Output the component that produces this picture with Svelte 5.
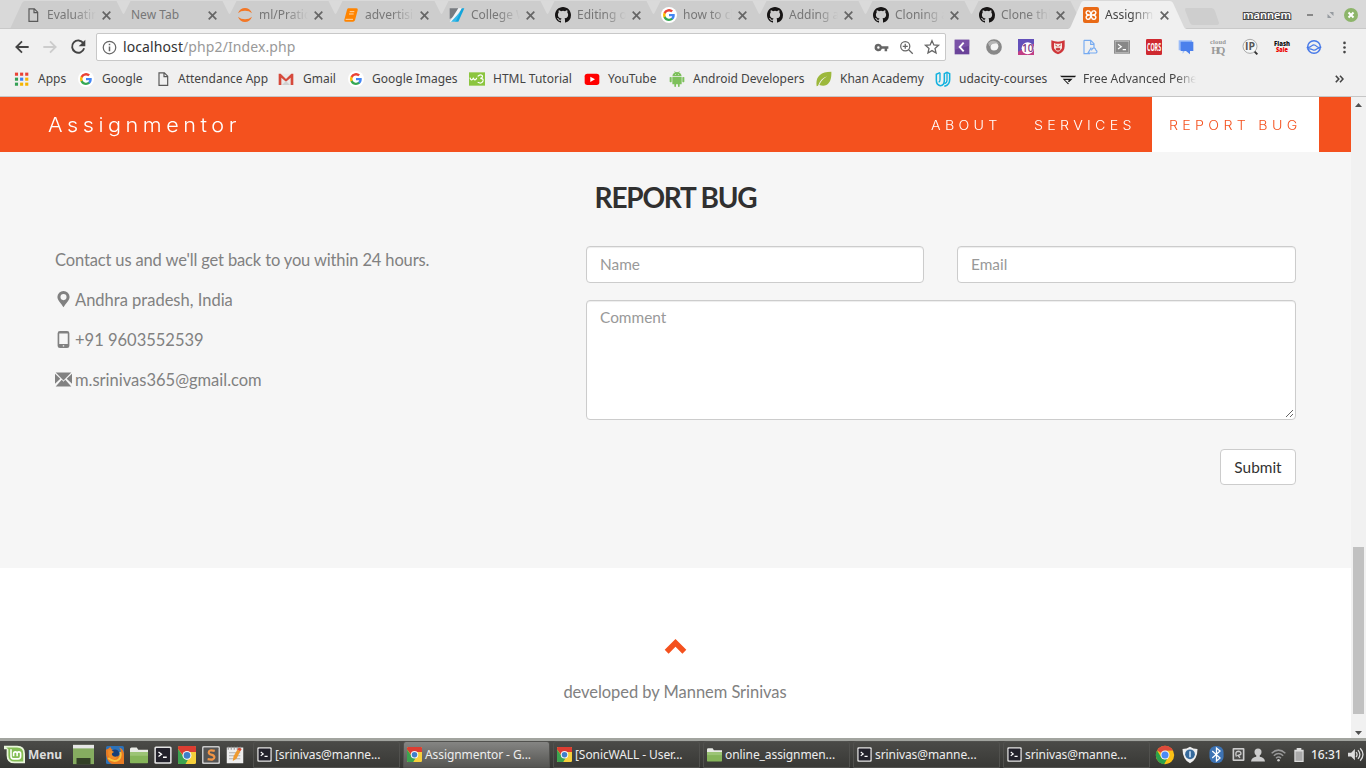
<script>
  const chromeLogo = `
    <circle cx="12" cy="12" r="11" fill="#fbc116"/>
    <path d="M12 12 2.5 6.5A11 11 0 0 1 21.600 6.500L12 7Z" fill="#dd4a3b"/>
    <path d="M2.500 6.500A11 11 0 0 0 11 23l5-9-4 3a5 5 0 0 1-5-3Z" fill="#2ba24c"/>
    <circle cx="12" cy="12" r="5.400" fill="#f4f4f4"/><circle cx="12" cy="12" r="4.200" fill="#4a8af4"/>`;
  const chromeSquare = `
    <rect x="0" y="0" width="24" height="24" rx="2" fill="#f6cf3b"/>
    <path d="M0 2a2 2 0 0 1 2-2h20a2 2 0 0 1 2 2v6H12L8 14 0 4Z" fill="#dc3d32"/>
    <path d="M0 4l8 11 6 2-4 7H2a2 2 0 0 1-2-2Z" fill="#3ca450"/>
    <circle cx="12" cy="12.500" r="6" fill="#f4f4f4"/><circle cx="12" cy="12.500" r="4.400" fill="#3f7fc9"/>`;
  const terminal = `
    <rect x="0.500" y="0.500" width="23" height="23" rx="2" fill="#e4e4e4"/>
    <rect x="2.500" y="2.500" width="19" height="19" rx="1" fill="#22212b"/>
    <path d="M6 8l4 3-4 3M12 15h5" fill="none" stroke="#fff" stroke-width="1.800"/>`;
  const folder = `
    <path d="M0 4q0-2 2-2h7l2 3h13v4H0Z" fill="#e9ebe6"/>
    <rect x="0" y="8" width="24" height="15" rx="1" fill="#86b55a"/>
    <path d="M0 8h24v5H0Z" fill="#9cc476"/>`;
  const page = `<path d="M6 2.700h8l5 5V21.500H6ZM13.500 3v5.500H19" fill="none" stroke="#5a5a5a" stroke-width="1.800"/>`;

  // Every glyph is drawn on a 24 by 24 grid.
  const art = {
    page, folder, terminal, chromeLogo, chromeSquare,
    jupyter: `<path d="M1.500 9.500C5-1 19-1 22.500 9.500 17 4.500 7 4.500 1.500 9.500ZM1.500 14.500c3.500 10.500 17.500 10.500 21 0-5.500 5-15.500 5-21 0Z" fill="#f37726"/>`,
    book: `<path d="M8 2h12q3 0 2 3l-4 15q-1 2-3 2H4q-3 0-2-3L6 4q1-2 2-2Z" fill="#ff8400"/><path d="M10 7h7M9 10.500h7M4 18.500h11" fill="none" stroke="#ffe3c2" stroke-width="1.300"/>`,
    college: `<path d="M1 2h13L9 14l-8 4Z" fill="#777b80"/><path d="M9 22 19 2h4L14 22Z" fill="#12a5dc"/><path d="M14 2h5L6 22H1Z" fill="#f2f4f6"/><path d="M3 22 17 7 10 22Z" fill="#35b8e8"/>`,
    github: `<path transform="scale(1.5)" fill="#171515" fill-rule="evenodd" d="M8 0C3.580 0 0 3.580 0 8c0 3.540 2.290 6.530 5.470 7.590.4.07.55-.17.55-.38 0-.19-.01-.82-.01-1.490-2.010.37-2.530-.49-2.690-.94-.09-.23-.48-.94-.82-1.130-.28-.15-.68-.52-.01-.53.63-.01 1.080.58 1.230.82.72 1.210 1.870.87 2.330.66.07-.52.28-.87.51-1.070-1.780-.2-3.640-.89-3.640-3.950 0-.87.31-1.590.82-2.150-.08-.2-.36-1.020.08-2.120 0 0 .67-.21 2.200.82a7.600 7.600 0 0 1 4 0c1.530-1.040 2.200-.82 2.200-.82.44 1.100.16 1.920.08 2.120.51.56.82 1.270.82 2.150 0 3.070-1.870 3.750-3.650 3.950.29.25.54.73.54 1.480 0 1.070-.01 1.930-.01 2.200 0 .21.15.46.55.38A8.010 8.010 0 0 0 16 8c0-4.420-3.580-8-8-8z"/>`,
    google: `<circle cx="12" cy="12" r="12" fill="#fff"/><g transform="translate(3 3) scale(.75)"><path fill="#4285f4" d="M23.500 12.300c0-.8-.1-1.600-.2-2.300H12v4.500h6.500a5.600 5.600 0 0 1-2.400 3.600v3h3.900c2.200-2.100 3.500-5.200 3.500-8.800Z"/><path fill="#34a853" d="M12 24c3.200 0 6-1.100 8-2.900l-3.900-3a7.200 7.200 0 0 1-10.800-3.800h-4v3.100A12 12 0 0 0 12 24Z"/><path fill="#fbbc05" d="M5.300 14.300a7.100 7.100 0 0 1 0-4.600V6.600h-4a12 12 0 0 0 0 10.800Z"/><path fill="#ea4335" d="M12 4.800c1.800 0 3.400.6 4.600 1.800L20 3.200A12 12 0 0 0 1.300 6.600l4 3.100A7.100 7.100 0 0 1 12 4.800Z"/></g>`,
    xampp: `<rect width="24" height="24" rx="3" fill="#e96a16"/><path d="M8 5.500a3 3 0 0 0-2.500 5q1 1.500 4 1.500h5q3 0 4-1.500a3 3 0 0 0-2.500-5q-2.500 0-3 3-.5 2-1 2t-1-2q-.5-3-3-3ZM8 18.500a3 3 0 0 1-2.500-5q1-1.500 4-1.500h5q3 0 4 1.500a3 3 0 0 1-2.500 5q-2.500 0-3-3-.5-2-1-2t-1 2q-.5 3-3 3Z" fill="none" stroke="#fff" stroke-width="2.200"/>`,
    apps: [0, 1, 2].flatMap(r => [0, 1, 2].map(c => `<rect x="${1.5 + c * 8.2}" y="${1 + r * 8}" width="5" height="5" fill="${['#ea4335', '#ea4335', '#ea4335', '#34a055', '#3b83f6', '#f5b400', '#34a055', '#f5b400', '#f5b400'][r * 3 + c]}"/>`)).join(''),
    gmail: `<path d="M2 4h20v17H2Z" fill="#e9e9e9"/><path d="M1 21V4h3l8 8 8-8h3v17h-4V10l-7 6-7-6v11Z" fill="#d64a3c"/><path d="m6 21 6-6 6 6Z" fill="#d0d0d0"/>`,
    w3: `<rect y="2" width="24" height="20" fill="#8bc53f"/><path d="M1.500 10q1 4 3 3t2-3q1 4 3 3t2-3M13 8q4-4 7-1 1 3-3 4 5 0 4 4-2 5-8 2" fill="none" stroke="#fff" stroke-width="1.700"/>`,
    youtube: `<rect x="1" y="4" width="22" height="17" rx="4" fill="#f00"/><path d="M9.500 8.500v8l7-4Z" fill="#fff"/>`,
    android: `<path d="M5 9h14v10q0 1-1 1h-2v3q0 1-1.300 1T13.500 23v-3h-3v3q0 1-1.300 1T8 23v-3H6q-1 0-1-1ZM1 9.500q1.500-1 3 0V16q-1.500 1.500-3 0ZM20 9.500q1.500-1 3 0V16q-1.500 1.500-3 0ZM5 8q0-4 4-6L8 .5 8.500 0 10 1.700q2-.5 4 0L15.500 0l.5.500L15 2q4 2 4 6Z" fill="#7dc05b"/><path d="M9 4.500h1v1H9ZM14 4.500h1v1h-1Z" fill="#fff"/>`,
    leaf: `<path d="M1 23C-1 10 5 1 23 1c1 17-7 24-18 20q3-8 12-13Q7 11 3 22Z" fill="#9cb83c"/>`,
    udacity: `<path d="M7.500 2.500 2 5v9q0 7 6 8 6 0 6-8V4l4-2 4 2v9q0 8-8 10" fill="none" stroke="#12b2df" stroke-width="2.300"/><path d="M7.500 2.500V13q0 3-2 3.500M18 2.500V14q0 4-4 5" fill="none" stroke="#12b2df" stroke-width="2"/>`,
    tri: `<path d="M0 7h24l-1.500 2.500H2.500Z" fill="#151515"/><path d="M4 11.500h15L13.500 17l-2-2 2.500-1.500H7.500l6 5.500-1.500 1Z" fill="#151515"/>`,
    key: `<path d="M7 6a6 6 0 1 0 5.600 8H17v4h4v-4h2v-4H12.600A6 6 0 0 0 7 6Zm0 4a2 2 0 1 1 0 4 2 2 0 0 1 0-4Z" fill="#666" fill-rule="evenodd"/>`,
    loupe: `<circle cx="10" cy="10" r="7.300" fill="none" stroke="#666" stroke-width="2"/><path d="M10 6v8M6 10h8M15.500 15.500 22 22" fill="none" stroke="#666" stroke-width="2"/>`,
    star: `<path d="m12 2.500 2.800 6.400 7 .6-5.300 4.600 1.600 6.900-6.100-3.600L5.900 21l1.600-6.900-5.300-4.600 7-.6Z" fill="none" stroke="#666" stroke-width="1.900"/>`,
    back: `<path d="M22 12H4M12 3.500 3.500 12l8.500 8.500" fill="none" stroke="#444" stroke-width="2.700"/>`,
    forward: `<path d="M2 12h18M12 3.500l8.500 8.500-8.500 8.500" fill="none" stroke="#ccc" stroke-width="2.700"/>`,
    reload: `<path d="M20 6.200A9.200 9.200 0 1 0 21.200 14" fill="none" stroke="#444" stroke-width="2.800"/><path d="M23 1v10H13Z" fill="#444"/>`,
    info: `<circle cx="12" cy="12" r="10" fill="none" stroke="#666" stroke-width="2"/><path d="M12 6v2.500M12 10.500V18" stroke="#666" stroke-width="2.400"/>`,
    kilo: `<rect x="1" y="1" width="22" height="22" fill="#6a4399"/><path d="M1 1h22v9L1 16Z" fill="#8a62b5" opacity=".5"/><path d="m14.500 5.500-6 6.500 6 6.500" fill="none" stroke="#fff" stroke-width="2.800"/>`,
    ring: `<circle cx="12" cy="12" r="8.500" fill="none" stroke="#888" stroke-width="6.500"/><circle cx="13" cy="11" r="5.500" fill="#f4f4f4"/><path d="M3 6q8-7 17 1-9-2-15 4Z" fill="#b5b5b5"/>`,
    ten: `<rect width="24" height="24" fill="#c23f86"/><path d="M0 0h24v7L0 19Z" fill="#6350ba"/><circle cx="14.500" cy="14" r="9" fill="#fff"/><text x="6" y="19.500" font-family="Open Sans" font-size="15" font-weight="600" fill="#7c3a83" textLength="17" lengthAdjust="spacingAndGlyphs">10</text>`,
    pig: `<path d="M2 2q10 4 20 0v9q0 9-10 12Q2 20 2 11Z" fill="#cf363a"/><path d="m6 6 3 1h6l3-1v8q-3 5-6 5t-6-5Z" fill="#f4e8e2"/><path d="M8 9l3 2M16 9l-3 2M9.500 14h5v2.500h-5Z" stroke="#c9383a" stroke-width="1.500" fill="#c9383a"/>`,
    drive: `<path d="M3 2h10l5 5v7M13 2v6h5M3 2v20h9" fill="none" stroke="#75aaf1" stroke-width="1.700"/><path d="m14 13-5 8h12q3-2 0-4-1-5-5-3-1 2-2 3" fill="none" stroke="#75aaf1" stroke-width="1.700"/>`,
    shell: `<rect x="0" y="2" width="24" height="20" fill="#888"/><rect x="1.800" y="3.800" width="20.400" height="16.400" fill="none" stroke="#c4c4c4"/><path d="m6 8 5 3.500L6 15M13 16h5" fill="none" stroke="#fff" stroke-width="1.700"/>`,
    cors: `<rect width="24" height="24" rx="2" fill="#cf2930"/><text transform="translate(1.500 17.500) scale(.62 1)" font-family="Open Sans" font-size="15" font-weight="700" fill="#fff" textLength="34" lengthAdjust="spacingAndGlyphs">CORS</text>`,
    chat: `<path d="M1 2h20v15H11l-4 5v-5H1Z" fill="#9abcf9"/><path d="M4 4h19v14h-5v5l-6-5H4Z" fill="#4b80ec"/>`,
    cloudhq: `<text x="0" y="8" font-family="Liberation Serif" font-size="10" font-weight="700" fill="#999" textLength="24">cloud</text><text x="2" y="22" font-family="Liberation Serif" font-size="16" font-weight="700" fill="#999" textLength="21">HQ</text>`,
    ip: `<circle cx="12" cy="11" r="10.500" fill="#f4f6f6" stroke="#aaa" stroke-width="1.500"/><path d="m19 19 4 4" stroke="#333" stroke-width="3"/><text x="4.500" y="16.500" font-family="Open Sans" font-size="15" font-weight="700" fill="#555" textLength="15" lengthAdjust="spacingAndGlyphs">IP</text>`,
    flash: `<text x="0" y="10" font-family="Open Sans" font-size="10" font-weight="800" fill="#111" textLength="24" lengthAdjust="spacingAndGlyphs">Flash</text><text x="3" y="20" font-family="Open Sans" font-size="10" font-weight="800" fill="#e00" textLength="18" lengthAdjust="spacingAndGlyphs">Sale</text>`,
    wave: `<circle cx="12" cy="12" r="9.500" fill="none" stroke="#4779e8" stroke-width="2.200"/><path d="M1 13q5 0 8-3t7 1q3 3 7 1M2 15q5-1 8 1t6-1l7-3" fill="none" stroke="#4779e8" stroke-width="1.900"/>`,
    dots: `<circle cx="12" cy="3.500" r="2.400" fill="#444"/><circle cx="12" cy="12" r="2.400" fill="#444"/><circle cx="12" cy="20.500" r="2.400" fill="#444"/>`,
    pin: `<path d="M12 0a8.600 8.600 0 0 0-8.600 8.600C3.400 13.500 9 18 12 23c3-5 8.600-9.500 8.600-14.400A8.600 8.600 0 0 0 12 0Zm0 4.300a4.300 4.300 0 1 1 0 8.600 4.300 4.300 0 0 1 0-8.600Z" fill="#818181" fill-rule="evenodd"/>`,
    phone: `<path d="M7 0h10q3.300 0 3.300 3v18q0 3-3.300 3H7q-3.300 0-3.300-3V3q0-3 3.300-3ZM6 3.500v15h12v-15Zm5 16.500v2h2v-2Z" fill="#818181" fill-rule="evenodd"/>`,
    mail: `<path d="M1 2h22L12 13.500ZM0 4l7.500 7L0 18ZM24 4v14l-7.500-7ZM1 22l8.500-9.500L12 15l2.500-2.500L23 22Z" fill="#818181"/>`,
    up: `<path d="m3.500 17 8.500-8.500 8.500 8.500" fill="none" stroke="#f4511e" stroke-width="5.300"/>`,
    mint: `<path d="M0 2h15q9 0 9 9v11H12q-9 0-9-9V6H0Z" fill="#e9f5dc"/><path d="M2.500 4H15q7 0 7 7v9H12q-7 0-7-7V6Z" fill="#84bd55"/><path d="M8 6v8q0 3 3 3h5q3 0 3-3v-3q0-2-2-2t-2 2v3m0-3q0-2-2-2t-2 2v3" fill="none" stroke="#fff" stroke-width="1.800"/>`,
    desktop: `<rect y="1" width="24" height="22" fill="#86ac60"/><rect y="1" width="24" height="4" fill="#e6e6e6"/><rect x="4" y="16" width="16" height="7" fill="#334026"/>`,
    firefox: `<rect width="24" height="24" rx="2" fill="#2c71b8"/><path d="M0 5q3-1 6-4 0 4 6 5-5 2-2 6 5 4 9-1 2-6-2-9 6 1 7 8v14H8Q-1 21 0 5Z" fill="#e97b22"/><path d="M3 16q8 7 14 2 4-4 2-10" fill="none" stroke="#f8c33c" stroke-width="2.500"/><circle cx="12" cy="10" r="5.500" fill="#173f78"/><path d="M3 5q5 1 8 3-4 1-3 4 3 4 8 1-3 7-10 3-4-3-3-11Z" fill="#ef8d28"/>`,
    sublime: `<rect width="24" height="24" rx="2" fill="#c8c8c8"/><rect x="2" y="2" width="20" height="20" rx="1" fill="#555"/><path d="M17 6.500q-8-2-8 2 0 2 3.500 3 4 1 4 3.500 0 4.500-9 2.500" fill="none" stroke="#f29545" stroke-width="2.900"/>`,
    notes: `<path d="M1 2h22v21H1Z" fill="#eee"/><path d="M3 1v4M7 1v4M11 1v4M15 1v4M19 1v4" stroke="#999" stroke-width="1.500"/><path d="M4 9h15M4 13h15M4 17h15" stroke="#999"/><path d="m9 20 1-6 5-9 4 2-5 10Z" fill="#ef9a2f"/><path d="m15 5 2-3 4 2-2 3Z" fill="#d94c30"/>`,
    shield: `<path d="M2 4q6 0 10-3 4 3 10 3 0 14-10 19Q2 18 2 4Z" fill="#eee"/><circle cx="12" cy="11" r="6.500" fill="#366a9c"/><path d="M12 7v8" stroke="#d3e7ff" stroke-width="2"/>`,
    bluetooth: `<rect x="2" width="20" height="24" rx="9" fill="#3d73b4"/><path d="m6 7 11 10-5 4V3l5 4L6 17" fill="none" stroke="#fff" stroke-width="1.800"/>`,
    disk: `<rect x="1" y="0" width="22" height="24" rx="2" fill="#ccc"/><rect x="4" y="3" width="16" height="18" fill="#4b4b49"/><path d="M8 16q-3-10 4-10 6 1 4 6l-5 2 4 4" fill="none" stroke="#ccc" stroke-width="2.500"/>`,
    user: `<circle cx="12" cy="7" r="6" fill="#ccc"/><path d="M9 10h6v5q8 1 9 8H0q1-7 9-8Z" fill="#ccc"/>`,
    wifi: `<path d="M1 10q11-10 22 0M4.500 14q7.500-7 15 0M8 18q4-4 8 0" fill="none" stroke="#999" stroke-width="2.300"/><circle cx="12" cy="21" r="2" fill="#ccc"/>`,
    battery: `<path d="M8 0h8v3h4v21H4V3h4Z" fill="#ddd"/><path d="M6 6h12v16H6Z" fill="#aaa"/>`,
    sound: `<path d="M0 9h5l6-6v18l-6-6H0Z" fill="#ddd"/><path d="M13 8q3 4 0 8M16 5q6 7 0 14M19.500 2q9 10 0 20" fill="none" stroke="#ddd" stroke-width="2"/>`
  };

  const tabs = [
    ['page', 'Evaluating'], ['', 'New Tab'], ['jupyter', 'ml/Pratice'], ['book', 'advertising'], ['college', 'College W'],
    ['github', 'Editing on'], ['google', 'how to cl'], ['github', 'Adding a f'], ['github', 'Cloning a'], ['github', 'Clone this'], ['xampp', 'Assignmen']
  ];
  const pitch = 106;

  // icon, label, item width, room for the icon, icon size
  const bookmarks = [
    ['apps', 'Apps', 64, 24, 15], ['google', 'Google', 77, 24, 16], ['page', 'Attendance App', 123, 23, 16],
    ['gmail', 'Gmail', 70, 25, 16], ['google', 'Google Images', 121, 24, 16], ['w3', 'HTML Tutorial', 115, 24, 16],
    ['youtube', 'YouTube', 85, 24, 16], ['android', 'Android Developers', 147, 24, 16], ['leaf', 'Khan Academy', 119, 24, 16],
    ['udacity', 'udacity-courses', 125, 24, 16], ['tri', 'Free Advanced Penetration', 136, 23, 16]
  ];
  const extensions = ['kilo', 'ring', 'ten', 'pig', 'drive', 'shell', 'cors', 'chat', 'cloudhq', 'ip', 'flash', 'wave'];
  const launchers = ['firefox', 'folder', 'terminal', 'chromeSquare', 'sublime', 'notes'];
  const windows = [
    ['terminal', '[srinivas@manne...'], ['chromeSquare', 'Assignmentor - G...'], ['chromeSquare', '[SonicWALL - User...'],
    ['folder', 'online_assignmen...'], ['terminal', 'srinivas@manne...'], ['terminal', 'srinivas@manne...']
  ];
  const tray = [['chromeLogo', 20, 26], ['shield', 18, 27], ['bluetooth', 17, 24], ['disk', 13, 19], ['user', 14, 20], ['wifi', 15, 21], ['battery', 14, 19]];
  const contacts = [['pin', 'Andhra pradesh, India'], ['phone', '+91 9603552539'], ['mail', 'm.srinivas365@gmail.com']];
</script>

{#snippet icon(name, size)}
  <svg class="icon" width={size} height={size} viewBox="0 0 24 24" aria-hidden="true">{@html art[name]}</svg>
{/snippet}

<div class="screen">
  <header class="tabstrip">
    <svg class="shapes" width="1366" height="29" viewBox="0 0 1366 29" aria-hidden="true">
      <path d="M10 29 22 3q1-2 3-2H1078V29Z" fill="#cdcdcd" />
      {#each tabs.slice(1) as _, i}
        <path d="M{116.5 + i * pitch} 1h14l-6 12q-1 2-2 0Z" fill="#dadada" />
      {/each}
      <path d="M0 28.500H1366" stroke="#c9c9c9" />
      <path d="M1068 29q2 0 3-3l9.500-22q1-3 3-3h86q3 0 4 3l10 22q1 3 3 3Z" fill="#f0f0f0" />
      <path d="M1186 8h25q3 0 4 3l4 12q0 2-2 2h-24q-2 0-3-2l-5-13q0-2 1-2Z" fill="#cecece" />
    </svg>
    <div class="tabs">
      {#each tabs as [glyph, label], i}
        <div class="tab" class:current={i === 10}>
          {#if glyph}{@render icon(glyph, 16)}{/if}
          <span class="tab-label">{label}</span>
          <svg class="close" width="9" height="9" viewBox="0 0 9 9"><path d="m.7.7 7.600 7.600M8.300.7.7 8.300" /></svg>
        </div>
      {/each}
    </div>
    <div class="window-controls">
      <span class="profile">mannem</span>
      <svg width="52" height="16" viewBox="0 0 52 16"><path d="M0 7h6v2H0Z" fill="#888" /><path d="M22.500 5h4v4ZM20.500 7v4h4Z" fill="#969ba0" /><circle cx="44" cy="8" r="7" fill="#8db56a" /><path d="m41.500 5.500 5 5M46.500 5.500l-5 5" stroke="#fff" stroke-width="2" /></svg>
    </div>
  </header>

  <div class="toolbar">
    <div class="nav-buttons">{@render icon('back', 16)}{@render icon('forward', 16)}{@render icon('reload', 16)}</div>
    <div class="address">
      {@render icon('info', 15)}
      <span class="url"><b>localhost</b>/php2/Index.php</span>
      <span class="address-tools">{@render icon('key', 15)}{@render icon('loupe', 15)}{@render icon('star', 16)}</span>
    </div>
    <div class="extensions">
      {#each extensions as name}{@render icon(name, 16)}{/each}
    </div>
    {@render icon('dots', 13)}
  </div>

  <nav class="bookmarks">
    {#each bookmarks as [glyph, label, width, slot, size]}
      <div class="bookmark" class:cut={glyph === 'tri'} style="width:{width}px">
        <span class="slot" style="width:{slot}px">{@render icon(glyph, size)}</span>{label}
      </div>
    {/each}
    <svg class="more" width="9" height="8" viewBox="0 0 9 8"><path d="m.8.800 3 3.200-3 3.200M5 .8l3 3.200-3 3.200" /></svg>
  </nav>

  <div class="viewport">
    <main>
      <div class="navbar">
        <span class="brand">Assignmentor</span>
        <span class="link about"><span>ABOUT</span></span>
        <span class="link services"><span>SERVICES</span></span>
        <span class="link report"><span>REPORT BUG</span></span>
      </div>
      <section class="contact">
        <h2>REPORT BUG</h2>
        <div class="columns">
          <div class="details">
            <p class="intro">Contact us and we'll get back to you within 24 hours.</p>
            {#each contacts as [glyph, label]}
              <p>{@render icon(glyph, 17)}<span>{label}</span></p>
            {/each}
          </div>
          <form>
            <div class="pair">
              <div class="field">Name</div>
              <div class="field">Email</div>
            </div>
            <div class="field comment">Comment
              <svg class="grip" width="9" height="9" viewBox="0 0 9 9"><path d="M1 8 8 1M5 8l3-3" /></svg>
            </div>
            <button type="button">Submit</button>
          </form>
        </div>
      </section>
      <footer>
        {@render icon('up', 25)}
        <p>developed by Mannem Srinivas</p>
      </footer>
    </main>
    <div class="scrollbar">
      <svg width="7" height="4" viewBox="0 0 7 4"><path d="M0 4 3.500 0 7 4Z" fill="#505050" /></svg>
      <div class="thumb"></div>
      <svg width="7" height="4" viewBox="0 0 7 4"><path d="M0 0h7L3.500 4Z" fill="#505050" /></svg>
    </div>
  </div>

  <div class="taskbar">
    <div class="menu">{@render icon('mint', 21)}<b>Menu</b></div>
    <div class="show">{@render icon('desktop', 21)}</div>
    <div class="launchers">{#each launchers as name}{@render icon(name, 18)}{/each}</div>
    <div class="windows">
      {#each windows as [glyph, label], i}
        <div class="window" class:focused={i === 1}>{@render icon(glyph, 15)}<span>{label}</span></div>
      {/each}
    </div>
    <div class="tray">
      {#each tray as [glyph, size, width]}
        <span class="tray-item" style="width:{width}px">{@render icon(glyph, size)}</span>
      {/each}
      <span class="clock">16:31</span>
      {@render icon('sound', 15)}
    </div>
  </div>
</div>

<style>
  :global(body) { margin: 0; overflow: hidden; }
  .screen { width: 1366px; height: 768px; display: flex; flex-direction: column; overflow: hidden; font: 12px/16px "Noto Sans", sans-serif; color: #444; background: #f0f0f0; }
  .screen * { box-sizing: border-box; }
  .icon { flex: none; display: block; overflow: visible; }

  .tabstrip { position: relative; height: 29px; flex: none; display: flex; background: #d9d9d9; }
  .shapes { position: absolute; left: 0; top: 0; }
  .tabs { position: relative; display: flex; padding-left: 25px; }
  .tab { width: 106px; display: flex; align-items: center; color: #777; padding-top: 1px; }
  .tab.current { color: #444; margin-left: -2px; }
  .tab .icon { margin-right: 6px; }
  .tab-label { flex: none; width: 49px; overflow: hidden; white-space: nowrap; mask-image: linear-gradient(90deg, #000 55%, transparent 100%); }
  .tab-label:first-child { width: 71px; mask-image: none; }
  .close { margin-left: 6px; fill: none; stroke: #666; stroke-width: 1.7; }
  .window-controls { position: relative; margin-left: auto; display: flex; align-items: center; width: 123px; }
  .profile { width: 64px; font-size: 11px; font-weight: 600; color: #fff; -webkit-text-stroke: 2px #444; paint-order: stroke fill; }

  .toolbar { height: 36px; flex: none; display: flex; align-items: center; }
  .nav-buttons { display: flex; gap: 12px; padding-left: 14px; width: 96px; }
  .address { width: 850px; height: 28px; border: 1px solid #c8c8c8; border-radius: 2px; background: #fff; display: flex; align-items: center; padding: 0 5px; }
  .url { margin-left: 6px; font-size: 14px; letter-spacing: .1px; color: #999; }
  .url b { font-weight: 400; color: #333; }
  .address-tools { margin-left: auto; display: flex; align-items: center; gap: 10px; }
  .extensions { display: flex; gap: 16px; padding-left: 8px; width: 392px; }

  .bookmarks { height: 32px; flex: none; display: flex; align-items: center; padding: 2px 22px 5px 14px; border-bottom: 1px solid #c6c6c6; }
  .bookmark { flex: none; display: flex; align-items: center; white-space: nowrap; overflow: hidden; }
  .bookmark.cut { mask-image: linear-gradient(90deg, #000 85%, transparent 100%); }
  .slot { flex: none; }
  .more { margin-left: auto; fill: none; stroke: #444; stroke-width: 1.6; }

  .viewport { height: 641px; flex: none; display: flex; }
  main { width: 1351px; background: #fff; font-family: Lato, sans-serif; color: #818181; display: flex; flex-direction: column; }
  .navbar { height: 55px; display: flex; align-items: center; background: #f4511e; color: #fff; font-family: Inter, sans-serif; padding: 0 32px 0 48px; }
  .brand { font-size: 20px; font-weight: 300; letter-spacing: 4.2px; margin-right: auto; transform: scaleX(1.08); transform-origin: left; }
  .link { height: 55px; line-height: 57px; padding-left: 17px; font-size: 12.6px; font-weight: 350; letter-spacing: 3.8px; white-space: nowrap; }
  .link span { display: inline-block; transform: scaleX(1.13); transform-origin: left; }
  .about { width: 103px; }
  .services { width: 135px; }
  .report { width: 167px; background: #fff; color: #f4511e; }
  .contact { height: 416px; background: #f6f6f6; padding: 28px 55px 0; }
  h2 { margin: 0; font-size: 28px; line-height: 35px; font-weight: 700; color: #303030; text-align: center; letter-spacing: -1.2px; }
  .columns { display: flex; padding-top: 31px; }
  .details { width: 531px; font-size: 16.5px; line-height: 26px; padding-top: 1px; }
  .details p { margin: 0 0 14px; display: flex; align-items: center; }
  .details .intro { letter-spacing: -.14px; }
  .details p .icon { margin: -2px 3px 0 0; }
  form { width: 710px; display: flex; flex-direction: column; font-size: 15.4px; color: #999; }
  .pair { display: grid; grid-template-columns: 338px 339px; gap: 33px; margin-bottom: 17px; }
  .field { height: 37px; border: 1px solid #ccc; border-radius: 4px; background: #fff; box-shadow: inset 0 1px 1px rgba(0, 0, 0, .075); padding: 6px 13px; line-height: 22px; }
  .comment { position: relative; flex: none; height: 120px; padding-top: 5px; }
  .grip { position: absolute; right: 1px; bottom: 1px; fill: none; stroke: #555; stroke-width: .9; }
  button { align-self: flex-end; margin-top: 29px; width: 76px; height: 36px; padding: 0; border: 1px solid #ccc; border-radius: 4px; background: #fff; color: #333; font: 15.4px Lato, sans-serif; }
  footer { display: flex; flex-direction: column; align-items: center; padding: 66px 1px 0 0; font-size: 16.5px; letter-spacing: -.05px; }
  footer p { margin: 21px 0 0; line-height: 24px; }
  .scrollbar { width: 15px; background: #f1f1f1; display: flex; flex-direction: column; align-items: center; padding: 6px 0 3px; }
  .thumb { width: 11px; height: 167px; margin: auto 0 17px; background: #c1c1c1; }

  .taskbar { height: 30px; flex: none; display: flex; align-items: center; border-top: 3px solid #a2a49f; background: linear-gradient(#4b4b48, #353532); color: #eee; padding-left: 4px; }
  .menu { display: flex; align-items: center; gap: 3px; width: 69px; font-size: 12px; color: #ddd; }
  .show { width: 33px; }
  .launchers { display: flex; gap: 6px; width: 147px; }
  .windows { display: flex; gap: 3px; }
  .window { width: 147px; height: 27px; display: flex; align-items: center; gap: 3px; padding-left: 3px; border: 1px solid #51514e; border-radius: 3px 3px 0 0; background: linear-gradient(#4a4a47, #393936); white-space: nowrap; letter-spacing: -.08px; }
  .window.focused { background: linear-gradient(#858583, #555552); }
  .tray { display: flex; align-items: center; padding-left: 5px; }
  .tray-item { flex: none; }
  .clock { width: 37px; font-weight: 500; }
</style>
